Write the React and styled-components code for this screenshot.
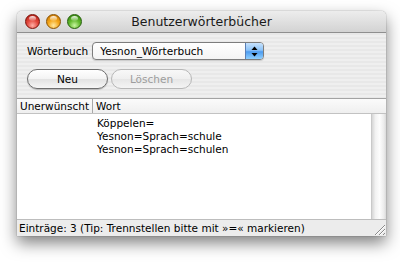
import React from 'react';
import styled, { createGlobalStyle } from 'styled-components';

const Global = createGlobalStyle`
  html, body { margin: 0; padding: 0; background: #ffffff; }
  body { font-family: "DejaVu Sans", "Noto Sans", sans-serif; color: #000; }
  * { box-sizing: border-box; }
`;

const Page = styled.div`
  width: 400px;
  height: 274px;
  padding: 11px 14px 0 17px;
`;

const Window = styled.div`
  width: 369px;
  height: 225px;
  display: flex;
  flex-direction: column;
  border-radius: 5px 5px 0 0;
  overflow: hidden;
  box-shadow: 0 7px 16px rgba(0, 0, 0, 0.5), 0 0 1px rgba(0, 0, 0, 0.7);
  background: repeating-linear-gradient(to bottom, #efefef 0 2px, #e8e8e8 2px 4px);
`;

const TitleBar = styled.div`
  height: 22px;
  flex: none;
  position: relative;
  display: flex;
  align-items: center;
  padding-left: 8px;
  gap: 6px;
  background: linear-gradient(to bottom, #ededed, #d3d3d3);
  border-bottom: 1px solid #8f8f8f;
`;

const colors = {
  red: ['#ffb0a6', '#e2483d', '#a8180e', '#7a1008'],
  yellow: ['#ffe7a0', '#f4a619', '#c06d00', '#8a5200'],
  green: ['#c8f5a0', '#62b92d', '#2f7d0c', '#255e0a'],
};

const Light = styled.span`
  width: 15px;
  height: 15px;
  border-radius: 50%;
  position: relative;
  border: 1px solid ${p => colors[p.$c][3]};
  background: radial-gradient(circle at 50% 80%, ${p => colors[p.$c][0]} 0%, ${p => colors[p.$c][1]} 45%, ${p => colors[p.$c][2]} 100%);
  &::after {
    content: '';
    position: absolute;
    left: 3px;
    top: 1px;
    width: 7px;
    height: 5px;
    border-radius: 50%;
    background: linear-gradient(to bottom, rgba(255,255,255,0.9), rgba(255,255,255,0.1));
  }
`;

const Title = styled.div`
  position: absolute;
  left: 0;
  right: 0;
  top: 0;
  bottom: 0;
  display: flex;
  align-items: center;
  justify-content: center;
  font-size: 12.5px;
  color: #1a1a1a;
  pointer-events: none;
`;

const Controls = styled.div`
  display: flex;
  flex-direction: column;
  gap: 9px;
  padding: 9px 10px 9px 10px;
  flex: none;
`;

const Row = styled.div`
  display: flex;
  align-items: center;
  gap: ${p => p.$gap || 4}px;
  font-size: 10.5px;
`;

const Popup = styled.div`
  width: 172px;
  height: 18px;
  display: flex;
  border: 1px solid #7d7d7d;
  border-radius: 4px;
  overflow: hidden;
  background: linear-gradient(to bottom, #ffffff, #f4f4f4);
  box-shadow: 0 1px 1px rgba(0,0,0,0.15);
`;

const PopupText = styled.div`
  flex: 1;
  padding-left: 7px;
  display: flex;
  align-items: center;
  font-size: 10.5px;
`;

const PopupArrows = styled.div`
  width: 18px;
  border-left: 1px solid #5a7fb5;
  display: flex;
  align-items: center;
  justify-content: center;
  background: linear-gradient(to bottom, #c7e2fd 0%, #8cc3f8 45%, #4d9cf0 55%, #8fd0ff 100%);
`;

const Button = styled.div`
  width: 81px;
  height: 20px;
  border-radius: 10px;
  display: flex;
  align-items: center;
  justify-content: center;
  font-size: 10.5px;
  color: ${p => (p.$disabled ? '#9d9d9d' : '#000')};
  border: 1px solid ${p => (p.$disabled ? '#b7b7b7' : '#6e6e6e')};
  background: ${p => (p.$disabled
    ? 'linear-gradient(to bottom, #f8f8f8 0%, #efefef 50%, #e6e6e6 51%, #f4f4f4 100%)'
    : 'linear-gradient(to bottom, #ffffff 0%, #f3f3f3 50%, #e2e2e2 51%, #f6f6f6 100%)')};
  box-shadow: ${p => (p.$disabled ? 'none' : '0 1px 1px rgba(0,0,0,0.2)')};
`;

const Header = styled.div`
  height: 16px;
  flex: none;
  display: flex;
  border-top: 1px solid #a3a3a3;
  border-bottom: 1px solid #c2c2c2;
  background: linear-gradient(to bottom, #fbfbfb, #efefef);
  font-size: 10.5px;
`;

const HeadCell = styled.div`
  width: ${p => (p.$w ? `${p.$w}px` : 'auto')};
  flex: ${p => (p.$w ? 'none' : '1')};
  padding-left: ${p => p.$pad}px;
  display: flex;
  align-items: center;
  border-right: ${p => (p.$w ? '1px solid #a8a8a8' : 'none')};
`;

const Body = styled.div`
  flex: 1;
  display: flex;
  background: #fff;
  min-height: 0;
`;

const List = styled.div`
  flex: 1;
  padding-top: 3px;
`;

const ListRow = styled.div`
  height: 13px;
  line-height: 13px;
  padding-left: 80px;
  font-size: 10.5px;
`;

const Scroll = styled.div`
  width: 15px;
  flex: none;
  border-left: 1px solid #c9c9c9;
  background: linear-gradient(to right, #d6d6d6, #f2f2f2 25%, #fdfdfd 55%, #ececec 85%, #dadada);
`;

const Status = styled.div`
  height: 17px;
  flex: none;
  display: flex;
  border-top: 1px solid #bdbdbd;
  background: #ececec;
`;

const StatusText = styled.div`
  flex: 1;
  padding-left: 2px;
  display: flex;
  align-items: center;
  font-size: 10.5px;
`;

const Grip = styled.div`
  width: 15px;
  flex: none;
  display: flex;
  align-items: flex-end;
  justify-content: flex-end;
`;

export default function App() {
  return (
    <>
      <Global />
      <Page>
        <Window>
          <TitleBar>
            <Light $c="red" />
            <Light $c="yellow" />
            <Light $c="green" />
            <Title>Benutzerwörterbücher</Title>
          </TitleBar>
          <Controls>
            <Row $gap={4}>
              <span>Wörterbuch</span>
              <Popup>
                <PopupText>Yesnon_Wörterbuch</PopupText>
                <PopupArrows>
                  <svg width="7" height="11" viewBox="0 0 7 11">
                    <path d="M3.5 0.5 L6.5 4 L0.5 4 Z" fill="#000" />
                    <path d="M3.5 10.5 L6.5 7 L0.5 7 Z" fill="#000" />
                  </svg>
                </PopupArrows>
              </Popup>
            </Row>
            <Row $gap={3}>
              <Button>Neu</Button>
              <Button $disabled>Löschen</Button>
            </Row>
          </Controls>
          <Header>
            <HeadCell $w={76} $pad={3}>Unerwünscht</HeadCell>
            <HeadCell $pad={3}>Wort</HeadCell>
          </Header>
          <Body>
            <List>
              <ListRow>Köppelen=</ListRow>
              <ListRow>Yesnon=Sprach=schule</ListRow>
              <ListRow>Yesnon=Sprach=schulen</ListRow>
            </List>
            <Scroll />
          </Body>
          <Status>
            <StatusText>Einträge: 3 (Tip: Trennstellen bitte mit »=« markieren)</StatusText>
            <Grip>
              <svg width="14" height="14" viewBox="0 0 14 14">
                <path d="M13 3 L3 13 M13 7 L7 13 M13 11 L11 13" stroke="#8a8a8a" strokeWidth="1" />
                <path d="M13 4 L4 13 M13 8 L8 13" stroke="#ffffff" strokeWidth="1" />
              </svg>
            </Grip>
          </Status>
        </Window>
      </Page>
    </>
  );
}
